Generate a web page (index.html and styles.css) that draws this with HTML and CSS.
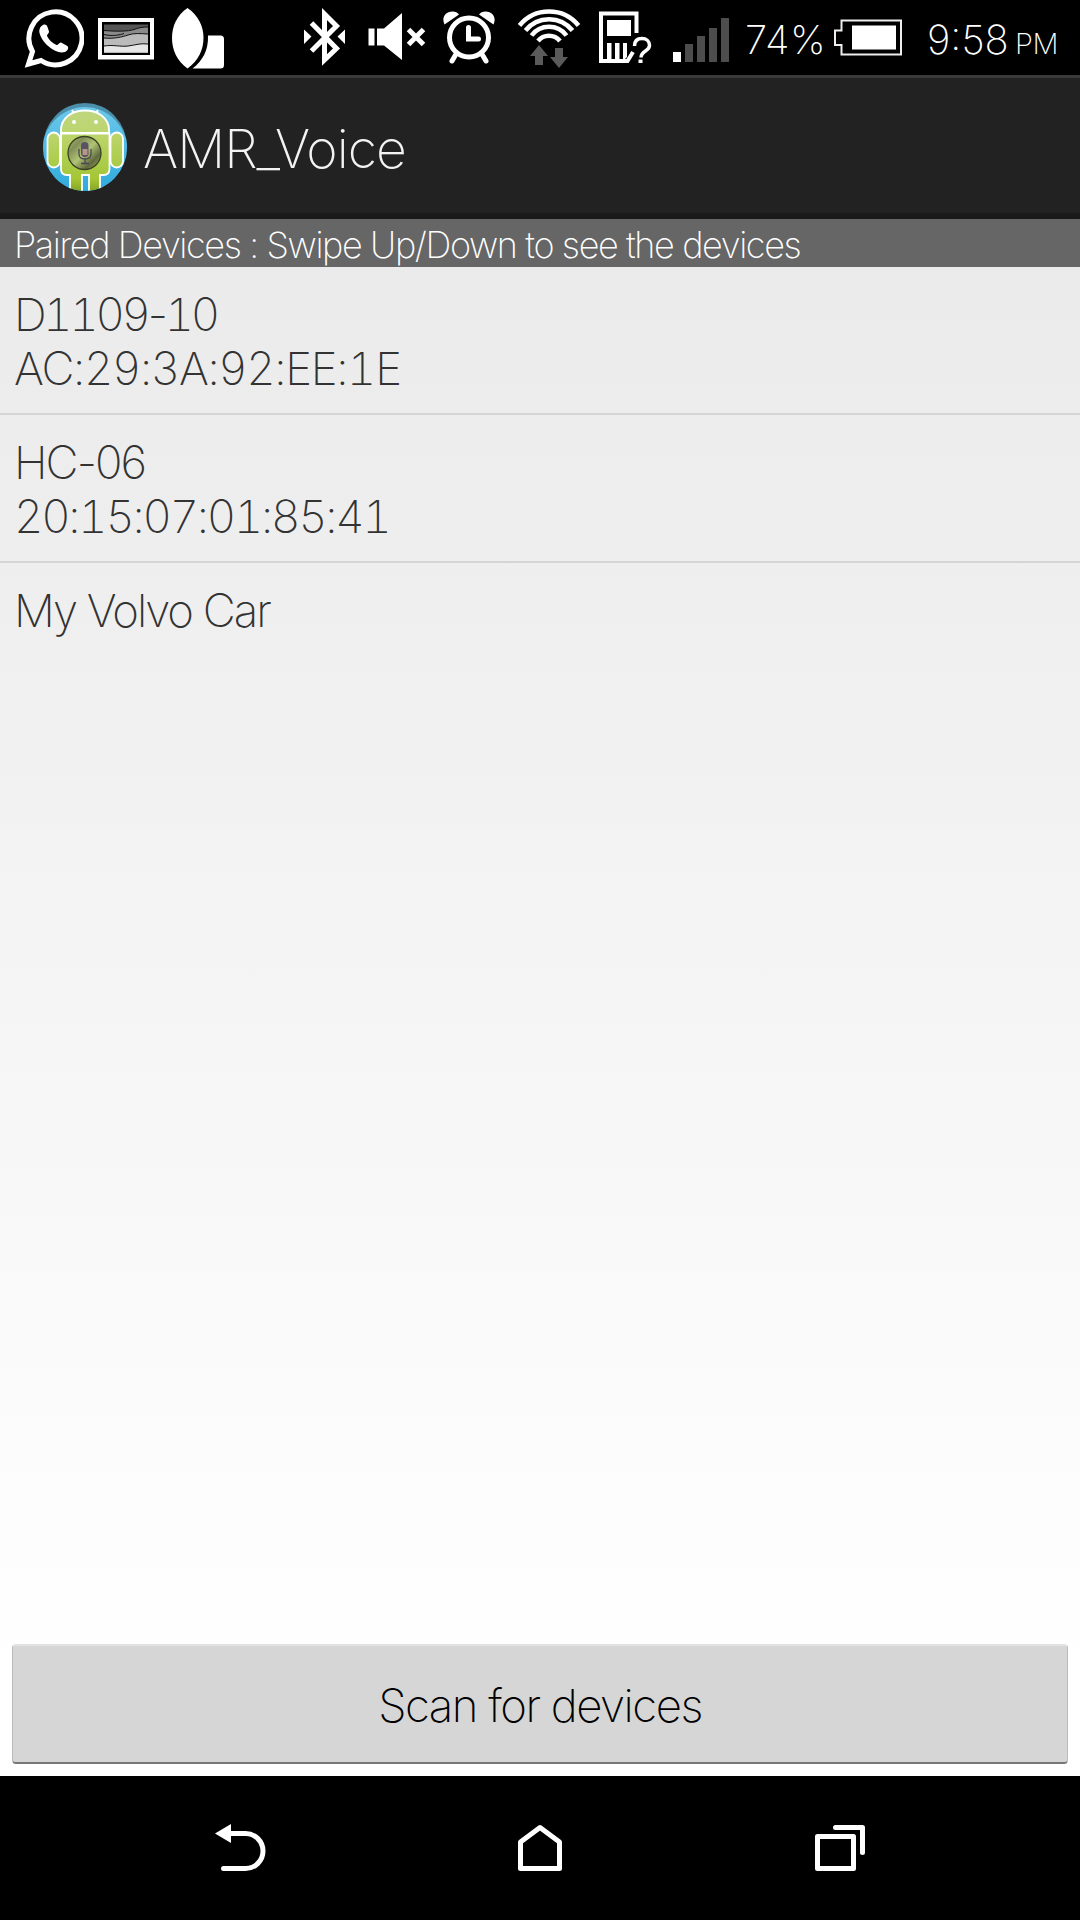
FILE: index.html
```html
<!DOCTYPE html>
<html lang="en">
<head>
<meta charset="utf-8">
<title>AMR_Voice</title>
<link rel="stylesheet" href="styles.css">
</head>
<body>
<div class="screen">
  <header class="status">
    <svg class="whatsapp" viewBox="24 0 60 75" width="60" height="75">
      <path d="M28.500 64 L32.500 51.500 A26.500 26.500 0 1 1 41 60.500 Z" fill="none" stroke="#fff" stroke-width="5"/>
      <path d="M43 25c2-1 3.500-.5 4.500 2l1.500 4.500c.5 1.500-2.500 3-2 4.500 2 4 5 7 9.500 9 1.500.5 3-3 4.500-2.500l5.500 3c2 1 2 2.500 1 4.500-1.500 2.500-6 3-9 2-9-3-17-11-19-19-.8-3.500 1-7 3.500-8z" fill="#fff"/>
    </svg>
    <svg class="gallery" viewBox="98 0 56 75" width="56" height="75">
      <path fill="#fff" d="M98 18h56v41.500H98z"/><path d="M102 22h48v33h-48z"/>
      <path fill="#555" d="M104 24.500h44v28h-44z"/>
      <path fill="#8a8a8a" d="M104 30.500c12 1 24 1 30-1 6-2 8-2.500 14-2.500v25.500h-44z"/>
      <path fill="#bbb" d="M104 38c10 1 18-1 24-3s12-1.500 20-1v18.500h-44z"/>
      <path fill="#e6e6e6" d="M104 46c10-1.500 16 1 24 0 8-1 12-3 20-2v8.500h-44z"/>
      <g fill="none" stroke="#111"><path d="M104 30.500c12 1 24 1 30-1 6-2 8-2.500 14-2.500M104 34.500c8 2 16 .5 20-1M104 38c10 1 18-1 24-3s12-1.500 20-1M104 46c10-1.500 16 1 24 0 8-1 12-3 20-2"/></g>
    </svg>
    <svg class="leaf" viewBox="171 0 54 75" width="54" height="75" fill="#fff">
      <path d="M187.500 8C198 15 203.500 26 203.500 38S198 61 187.500 68.500C177 61 172 50 172 38S177 15 187.500 8z"/>
      <path d="M208 35.500h12.500q3.500 0 3.500 3.500v26q0 3.500-3.500 3.500H192.500C203 60.500 208.500 50 208 35.500z"/>
    </svg>
    <svg class="bluetooth" viewBox="304 0 42 75" width="42" height="75">
      <path d="M311.500 23l25 25.500-12 11.500V14l12 12-25 25" fill="none" stroke="#fff" stroke-width="5"/>
      <path fill="#fff" d="M304 29.500l7.500 7-7.500 7.500zM345 29.500l-7.500 7 7.500 7.500z"/>
    </svg>
    <svg class="muted" viewBox="368 0 58 75" width="58" height="75">
      <path fill="#fff" d="M368.500 28.500h6v17h-6zM377 28.500h7l18-15.500v47l-18-14.500h-7z"/>
      <path d="M408.500 29.500l15 15M423.500 29.500l-15 15" stroke="#fff" stroke-width="5"/>
    </svg>
    <svg class="alarm" viewBox="443 0 52 75" width="52" height="75">
      <circle cx="469" cy="37.500" r="19.500" fill="none" stroke="#fff" stroke-width="5"/>
      <path d="M468.500 27.500V39h10M455.500 55l-3.500 6M482.500 55l3.500 6" fill="none" stroke="#fff" stroke-width="5" stroke-linecap="round"/>
      <path fill="#fff" d="M444.500 24.500c-3-6 0-13 8-13 3 0 5 1 6.500 3zM493.500 24.500c3-6 0-13-8-13-3 0-5 1-6.500 3z"/>
    </svg>
    <svg class="wifi" viewBox="517 0 64 75" width="64" height="75">
      <g fill="none" stroke="#fff" stroke-width="4.500"><path d="M519.500 25.500a38 38 0 0 1 59 0M525.500 30.500a30 30 0 0 1 47 0M531.500 35.500a22 22 0 0 1 35 0M538 41a14 14 0 0 1 22 0"/></g>
      <path fill="#5a5a5a" d="M539 45l9 11h-5v9h-8v-9h-5zM559 68l-9-11h5v-9h8v9h5z"/>
    </svg>
    <svg class="sim" viewBox="599 0 53 75" width="53" height="75">
      <path d="M636.500 33V13.500H601v47.500H627.500L633 52" fill="none" stroke="#fff" stroke-width="4"/>
      <path fill="#fff" d="M607 20h24v16h-24zM607 43h4.500v18H607zM615 43h4.500v18H615zM623 43h4v14l-4 4z"/>
      <path d="M634.500 46c0-5 3-7.500 7.500-7.500s7.500 3 7.500 7c0 6-8.500 5-8.500 12" fill="none" stroke="#fff" stroke-width="3.500"/>
      <path fill="#fff" d="M638.500 59.500h4v3.500h-4z"/>
    </svg>
    <svg class="signal" viewBox="673 0 56 75" width="56" height="75">
      <path fill="#fff" d="M673 52h8v10h-8z"/>
      <path fill="#4d4d4d" d="M685 44h8v18h-8zM697 36h8v26h-8zM709 28h8v34h-8zM721 18h8v44h-8z"/>
    </svg>
    <span class="percent">74%</span>
    <svg class="battery" viewBox="833 0 70 75" width="70" height="75">
      <path d="M841.500 20.500h59.500v34h-59.500v-9.500h-6.500v-14.500h6.500z" fill="none" stroke="#eee" stroke-width="2"/>
      <path fill="#fff" d="M852 25.500h44v24h-44z"/>
    </svg>
    <span class="clock">9:58</span><span class="ampm">PM</span>
  </header>

  <div class="appbar">
    <svg class="logo" viewBox="40 100 90 96" width="90" height="96">
      <defs>
        <linearGradient id="sky" x1="0" y1="0" x2="0" y2="1"><stop offset="0" stop-color="#6cc8ea"/><stop offset="1" stop-color="#2ba8dc"/></linearGradient>
        <linearGradient id="body" gradientUnits="userSpaceOnUse" x1="0" y1="110" x2="0" y2="191"><stop offset="0" stop-color="#c0d680"/><stop offset=".3" stop-color="#bcd56c"/><stop offset=".7" stop-color="#a9cb45"/><stop offset=".85" stop-color="#a6c636"/><stop offset="1" stop-color="#86a524"/></linearGradient>
        <linearGradient id="disc" x1="0" y1="0" x2="1" y2="1"><stop offset="0" stop-color="#b3c86c"/><stop offset=".25" stop-color="#828e58"/><stop offset=".5" stop-color="#b0c474"/><stop offset=".75" stop-color="#606a40"/><stop offset="1" stop-color="#a8c052"/></linearGradient>
        <clipPath id="round"><ellipse cx="85" cy="147" rx="42" ry="44"/></clipPath>
      </defs>
      <g clip-path="url(#round)">
        <path fill="#4b8fab" d="M40 100h90v96H40z"/>
        <ellipse cx="85" cy="152" rx="43" ry="45" fill="url(#sky)"/>
        <g fill="url(#body)" stroke="#fff" stroke-width="1.800">
          <path d="M72 110l3 5M98 110l-3 5"/>
          <path d="M61 133v-3c0-12 11-19.500 24-19.500s24 7.500 24 19.500v3z"/>
          <rect x="47.500" y="132.500" width="12.500" height="35" rx="6.250"/>
          <rect x="110.500" y="132.500" width="12.500" height="35" rx="6.250"/>
          <path d="M61 133.500h48.500V169q0 6-6 6H100v19H89V175h-7v19H70V175h-3q-6 0-6-6z"/>
        </g>
        <circle cx="74" cy="122" r="2" fill="#fff"/><circle cx="96" cy="122" r="2" fill="#fff"/>
      </g>
      <circle cx="84.500" cy="153" r="16.500" fill="url(#disc)" stroke="#3a4224" stroke-width="1.300"/>
      <rect x="81" y="142" width="7.500" height="15" rx="3.750" fill="#5c5064"/>
      <path fill="#b5958c" d="M82.500 149h5v6h-5z"/>
      <path d="M79 149v5q0 5 6 5t6-5v-5M85 159v4M81 163.500h8" fill="none" stroke="#4b4750" stroke-width="1.300"/>
    </svg>
    <h1 class="title">AMR_Voice</h1>
  </div>

  <h2 class="section">Paired Devices : Swipe Up/Down to see the devices</h2>

  <main class="content">
    <ul class="devices">
      <li class="device"><span class="name-digits">D1109<span class="dash">-</span>10</span><span class="mac">AC:29:3A:92:EE:1E</span></li>
      <li class="device"><span class="name-short">HC-06</span><span class="mac-digits">20:15:07:01:85:41</span></li>
      <li class="device"><span class="name">My Volvo Car</span></li>
    </ul>
    <button class="scan" type="button">Scan for devices</button>
  </main>

  <nav class="navbar">
    <svg viewBox="90 1776 300 144" width="300" height="144">
      <path d="M223.500 1868.500h22a17.500 17.500 0 0 0 0-35H230" fill="none" stroke="#fff" stroke-width="5" stroke-linecap="round"/>
      <path fill="#fff" d="M215 1833.500l16-9.500v19z"/>
    </svg>
    <svg viewBox="390 1776 300 144" width="300" height="144">
      <path d="M520.500 1868.500v-26.500l19.500-14.500 19.500 14.500v26.500z" fill="none" stroke="#fff" stroke-width="5" stroke-linejoin="round"/>
    </svg>
    <svg viewBox="690 1776 300 144" width="300" height="144">
      <path d="M817.500 1836.500h36v32h-36zM835.500 1827.500h27v25" fill="none" stroke="#fff" stroke-width="5" stroke-linecap="round" stroke-linejoin="round"/>
    </svg>
  </nav>
</div>
</body>
</html>
```
FILE: styles.css
```css
* { box-sizing: border-box; }
body { margin: 0; background: #000; font-family: Inter, "Liberation Sans", sans-serif; font-weight: 200; }
h1, h2, ul { margin: 0; padding: 0; font-weight: inherit; }
svg { display: block; flex: none; }
.screen { display: flex; flex-direction: column; width: 1080px; height: 1920px; overflow: hidden; }

.status { display: flex; height: 75px; padding-left: 24px; background: #000; color: #fff; white-space: nowrap; }
.gallery { margin-left: 14px; }
.leaf { margin-left: 17px; }
.bluetooth { margin-left: 79px; }
.muted { margin-left: 22px; }
.alarm { margin-left: 17px; }
.wifi { margin-left: 22px; }
.sim { margin-left: 18px; }
.signal { margin-left: 21px; }
.percent { width: 88px; margin-left: 16px; font-size: 40px; line-height: 79px; letter-spacing: 0.3px; }
.clock { width: 88px; margin-left: 24px; font-size: 40px; line-height: 79px; letter-spacing: 0; }
.ampm { font-size: 29px; line-height: 87px; letter-spacing: -0.4px; }

.appbar { display: flex; gap: 13px; height: 144px; padding: 22px 0 0 40px; border-top: 3px solid #3a3a3a; border-bottom: 6px solid #1a1a1a; background: #222; color: #f3f3f3; }
.title { font-size: 53.5px; line-height: 97px; letter-spacing: -0.98px; }

.section { height: 48px; padding: 2px 0 0 14px; background: #666; color: #fff; font-size: 36px; line-height: 48px; letter-spacing: -1.38px; white-space: nowrap; }

.content { flex: 1; display: flex; flex-direction: column; justify-content: space-between; padding: 0 12px 12px; background: linear-gradient(#ebebeb, #eee 18%, #fefefe 88%, #fff); }
.devices { margin: 0 -12px; list-style: none; }
.device { display: flex; flex-direction: column; align-items: flex-start; padding: 21px 14px 17px; border-bottom: 2px solid #d5d5d5; color: #333; font-size: 45.5px; line-height: 54px; }
.device:last-child { border-bottom: 0; }
.name { letter-spacing: -2px; }
.name-short { letter-spacing: -1.95px; }
.name-digits, .mac, .mac-digits { font-variant-numeric: tabular-nums; }
.name-digits { letter-spacing: -3.3px; }
.dash { font-variant-numeric: normal; }
.mac { letter-spacing: -1.35px; }
.mac-digits { letter-spacing: -2.25px; }

.scan { height: 120px; padding: 3px 0 0; border: solid; border-width: 2px 1px; border-color: #e2e2e2 #bbb #777; border-radius: 4px; background: #d6d6d6; color: #000; font: inherit; font-size: 45.5px; letter-spacing: -1.5px; }

.navbar { display: flex; height: 144px; padding: 0 90px; background: #000; }
```
